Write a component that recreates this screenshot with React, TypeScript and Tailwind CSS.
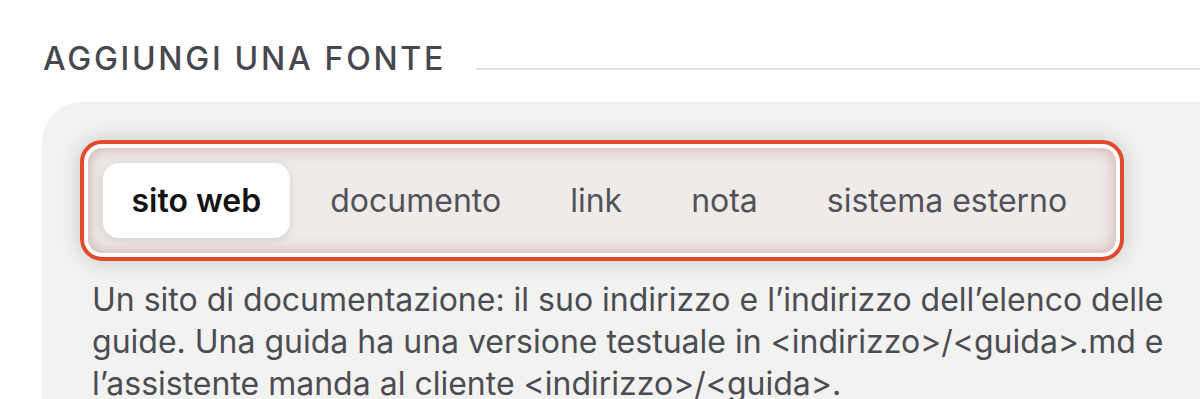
import React from "react";

const tabs = ["sito web", "documento", "link", "nota", "sistema esterno"];

export default function App() {
  return (
    <div className="w-[1200px] h-[399px] overflow-hidden bg-white font-['Inter',sans-serif]">
      <div className="flex items-end pl-[43px] pt-[39px]">
        <h2 className="text-[32px] leading-[40px] font-medium tracking-[0.085em] text-[#47474e] whitespace-nowrap">
          AGGIUNGI UNA FONTE
        </h2>
        <div className="ml-[30px] mb-[9px] flex-1 h-[2px] bg-[#e2e2e2]" />
      </div>

      <div className="ml-[42px] mt-[23px] rounded-tl-[40px] bg-[#f2f2f0] pl-[38px] pt-[38px] h-[400px]">
        <div className="inline-flex rounded-[22px] border-[4px] border-[#e24a2e] bg-white p-[4px] shadow-[0_0_22px_rgba(0,0,0,0.18)]">
          <div className="flex gap-[12px] rounded-[14px] bg-[#eeebe9] pl-[15px] pr-[20px] py-[15px] shadow-[inset_0_0_16px_rgba(175,120,112,0.55)]">
            {tabs.map((t, i) => (
              <div
                key={t}
                className={
                  i === 0
                    ? "h-[75px] px-[28.5px] flex items-center rounded-[16px] bg-white text-[32px] font-semibold text-[#141414] shadow-[0_2px_10px_rgba(0,0,0,0.12)] whitespace-nowrap"
                    : "h-[75px] px-[28.5px] flex items-center rounded-[16px] text-[32px] text-[#52525a] whitespace-nowrap"
                }
              >
                {t}
              </div>
            ))}
          </div>
        </div>

        <p className="ml-[12px] mt-[18px] w-[1100px] text-[32px] leading-[42px] text-[#4c4c53]">
          Un sito di documentazione: il suo indirizzo e l’indirizzo dell’elenco delle guide. Una guida ha una
          versione testuale in &lt;indirizzo&gt;/&lt;guida&gt;.md e l’assistente manda al cliente
          &lt;indirizzo&gt;/&lt;guida&gt;.
        </p>
      </div>
    </div>
  );
}
